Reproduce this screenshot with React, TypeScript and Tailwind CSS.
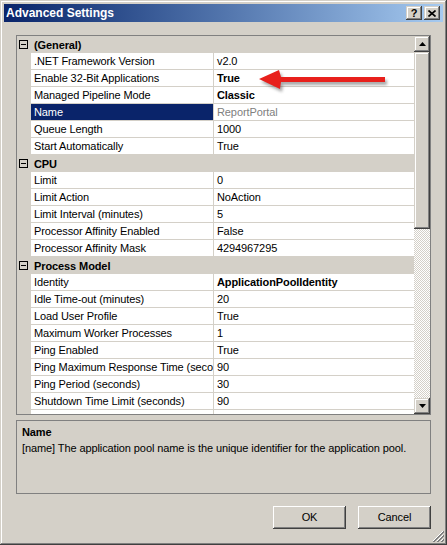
type Row = { name: string; value: string; bold?: boolean; selected?: boolean };
type Section = { title: string; rows: Row[] };

const sections: Section[] = [
  {
    title: "(General)",
    rows: [
      { name: ".NET Framework Version", value: "v2.0" },
      { name: "Enable 32-Bit Applications", value: "True", bold: true },
      { name: "Managed Pipeline Mode", value: "Classic", bold: true },
      { name: "Name", value: "ReportPortal", selected: true },
      { name: "Queue Length", value: "1000" },
      { name: "Start Automatically", value: "True" },
    ],
  },
  {
    title: "CPU",
    rows: [
      { name: "Limit", value: "0" },
      { name: "Limit Action", value: "NoAction" },
      { name: "Limit Interval (minutes)", value: "5" },
      { name: "Processor Affinity Enabled", value: "False" },
      { name: "Processor Affinity Mask", value: "4294967295" },
    ],
  },
  {
    title: "Process Model",
    rows: [
      { name: "Identity", value: "ApplicationPoolIdentity", bold: true },
      { name: "Idle Time-out (minutes)", value: "20" },
      { name: "Load User Profile", value: "True" },
      { name: "Maximum Worker Processes", value: "1" },
      { name: "Ping Enabled", value: "True" },
      { name: "Ping Maximum Response Time (seconds)", value: "90" },
      { name: "Ping Period (seconds)", value: "30" },
      { name: "Shutdown Time Limit (seconds)", value: "90" },
      { name: "Startup Time Limit (seconds)", value: "90" },
    ],
  },
];

const raised =
  "bg-[#d4d0c8] shadow-[inset_-1px_-1px_#404040,inset_1px_1px_#d4d0c8,inset_-2px_-2px_#808080,inset_2px_2px_#ffffff]";

function Arrow({ up }: { up?: boolean }) {
  return (
    <svg width="7" height="4" viewBox="0 0 7 4">
      {up ? <polygon points="3.5,0 7,4 0,4" fill="#000" /> : <polygon points="0,0 7,0 3.5,4" fill="#000" />}
    </svg>
  );
}

function Scrollbar() {
  return (
    <div className="w-[16px] flex flex-col shrink-0">
      <div className={`h-[16px] flex items-center justify-center ${raised}`}>
        <Arrow up />
      </div>
      <div className={`h-[177px] ${raised}`} />
      <div className="flex-1 bg-[repeating-conic-gradient(#d4d0c8_0_25%,#ffffff_0_50%)] bg-[length:2px_2px]" />
      <div className={`h-[16px] flex items-center justify-center ${raised}`}>
        <Arrow />
      </div>
    </div>
  );
}

function SectionHeader({ title }: { title: string }) {
  return (
    <div className="h-[17px] flex items-center bg-[#d4d0c8]">
      <div className="w-[14px] h-full flex items-center pl-[2px]">
        <div className="w-[9px] h-[9px] border border-[#000] flex items-center justify-center">
          <div className="w-[5px] h-[1px] bg-[#000]" />
        </div>
      </div>
      <span className="pl-[3px] font-bold leading-[16px]">{title}</span>
    </div>
  );
}

function GridRow({ row }: { row: Row }) {
  return (
    <div className="h-[17px] flex bg-[#d4d0c8]">
      <div className="w-[14px] shrink-0" />
      <div
        className={`w-[183px] shrink-0 border-b border-r border-[#d4d0c8] px-[3px] leading-[16px] whitespace-nowrap overflow-hidden ${
          row.selected ? "bg-[#0a246a] text-white" : "bg-white"
        }`}
      >
        {row.name}
      </div>
      <div
        className={`flex-1 border-b border-[#d4d0c8] bg-white px-[3px] leading-[16px] whitespace-nowrap overflow-hidden ${
          row.bold ? "font-bold" : ""
        } ${row.selected ? "text-[#808080]" : ""}`}
      >
        {row.value}
      </div>
    </div>
  );
}

export default function App() {
  return (
    <div className="relative w-[447px] h-[545px] p-[4px] flex flex-col bg-[#d4d0c8] text-[11px] tracking-[-0.1px] text-black font-['Liberation_Sans',Arial,sans-serif] shadow-[inset_-1px_-1px_#404040,inset_1px_1px_#d4d0c8,inset_-2px_-2px_#808080,inset_2px_2px_#ffffff]">
      {/* title bar */}
      <div className="h-[18px] shrink-0 flex items-center justify-between bg-linear-to-r from-[#0a246a] to-[#a6caf0] pl-[2px] pr-[3px]">
        <span className="text-white font-bold text-[12px] tracking-normal leading-[18px]">Advanced Settings</span>
        <div className="flex gap-[2px]">
          <div className={`w-[16px] h-[14px] flex items-center justify-center font-bold text-[11px] leading-none ${raised}`}>?</div>
          <div className={`w-[16px] h-[14px] flex items-center justify-center ${raised}`}>
            <svg width="8" height="7" viewBox="0 0 8 7">
              <path d="M0.5 0.5 L7.5 6.5 M7.5 0.5 L0.5 6.5" stroke="#000" strokeWidth="1.6" />
            </svg>
          </div>
        </div>
      </div>

      <div className="flex-1 flex flex-col px-[12px] pt-[13px]">
        {/* property grid */}
        <div className="h-[380px] shrink-0 border border-[#808080] flex bg-[#d4d0c8]">
          <div className="flex-1 overflow-hidden">
            {sections.map((s) => (
              <div key={s.title}>
                <SectionHeader title={s.title} />
                {s.rows.map((r) => (
                  <GridRow key={r.name} row={r} />
                ))}
              </div>
            ))}
          </div>
          <Scrollbar />
        </div>

        {/* description */}
        <div className="mt-[5px] h-[74px] shrink-0 border border-[#808080] pl-[5px] pt-[3px] leading-[16px]">
          <div className="font-bold">Name</div>
          <div>[name] The application pool name is the unique identifier for the application pool.</div>
        </div>

        {/* buttons */}
        <div className="mt-[12px] flex justify-end gap-[12px]">
          <button className="w-[73px] h-[23px] bg-[#d4d0c8] shadow-[inset_-1px_-1px_#404040,inset_1px_1px_#ffffff,inset_-2px_-2px_#808080] text-[11px]">OK</button>
          <button className="w-[73px] h-[23px] bg-[#d4d0c8] shadow-[inset_-1px_-1px_#404040,inset_1px_1px_#ffffff,inset_-2px_-2px_#808080] text-[11px]">Cancel</button>
        </div>
      </div>

      {/* resize grip */}
      <svg className="absolute right-[3px] bottom-[3px]" width="12" height="12" viewBox="0 0 12 12">
        <path d="M11 1 L1 11 M11 5 L5 11 M11 9 L9 11" stroke="#ffffff" strokeWidth="1" />
        <path d="M12 1 L1 12 M12 2 L2 12 M12 5 L5 12 M12 6 L6 12 M12 9 L9 12 M12 10 L10 12" stroke="#808080" strokeWidth="1" />
      </svg>

      {/* red annotation arrow */}
      <svg className="absolute left-[255px] top-[66px]" width="140" height="30" viewBox="0 0 140 30">
        <defs>
          <filter id="sh" x="-20%" y="-50%" width="140%" height="200%">
            <feGaussianBlur stdDeviation="1.5" />
          </filter>
        </defs>
        <g transform="translate(2,3)" filter="url(#sh)" opacity="0.45">
          <polygon points="4,13 24,4 26,11 130,11 130,16 26,16 25,23" fill="#404040" />
        </g>
        <polygon points="4,13 24,4 26,11 130,11 130,16 26,16 25,23" fill="#e8201c" />
      </svg>
    </div>
  );
}
